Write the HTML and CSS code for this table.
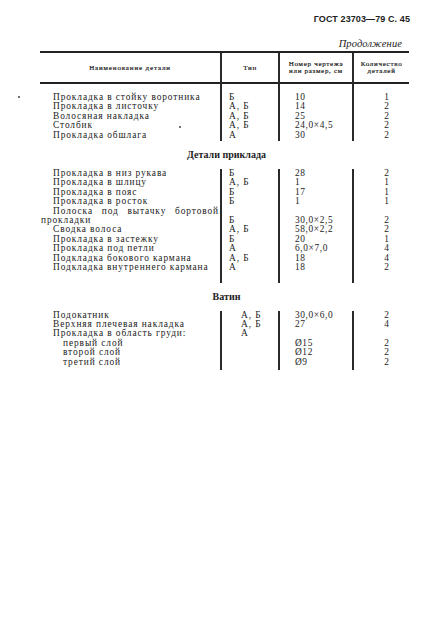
FILE: index.html
```html
<!DOCTYPE html>
<html lang="ru">
<head>
<meta charset="utf-8">
<title>ГОСТ 23703—79 С. 45</title>
<link rel="stylesheet" href="styles.css">
</head>
<body>
<div class="page">
  <span class="speck speck-a"></span>
  <span class="speck speck-b"></span>
  <div class="runhead">ГОСТ 23703—79 С. 45</div>
  <div class="cont">Продолжение</div>
  <table class="spec">
    <colgroup>
      <col class="c1"><col class="c2"><col class="c3"><col class="c4">
    </colgroup>
    <thead>
      <tr>
        <th class="h1">Наименование детали</th>
        <th class="h2">Тип</th>
        <th class="h3"><span class="hl">Номер чертежа</span><span class="hl">или размер, см</span></th>
        <th class="h4"><span class="hl">Количество</span><span class="hl">деталей</span></th>
      </tr>
    </thead>
    <tbody class="grp grp-a">
      <tr><td class="name">Прокладка в стойку воротника</td><td class="typ">Б</td><td class="num">10</td><td class="qty">1</td></tr>
      <tr><td class="name">Прокладка в листочку</td><td class="typ">А, Б</td><td class="num">14</td><td class="qty">2</td></tr>
      <tr><td class="name">Волосяная накладка</td><td class="typ">А, Б</td><td class="num">25</td><td class="qty">2</td></tr>
      <tr><td class="name">Столбик</td><td class="typ">А, Б</td><td class="num">24,0×4,5</td><td class="qty">2</td></tr>
      <tr><td class="name">Прокладка обшлага</td><td class="typ">А</td><td class="num">30</td><td class="qty">2</td></tr>
    </tbody>
    <tbody>
      <tr><td class="section" colspan="4">Детали приклада</td></tr>
    </tbody>
    <tbody class="grp grp-b">
      <tr><td class="name">Прокладка в низ рукава</td><td class="typ">Б</td><td class="num">28</td><td class="qty">2</td></tr>
      <tr><td class="name">Прокладка в шлицу</td><td class="typ">А, Б</td><td class="num">1</td><td class="qty">1</td></tr>
      <tr><td class="name">Прокладка в пояс</td><td class="typ">Б</td><td class="num">17</td><td class="qty">1</td></tr>
      <tr><td class="name">Прокладка в росток</td><td class="typ">Б</td><td class="num">1</td><td class="qty">1</td></tr>
      <tr><td class="name">Полоска под вытачку бортовой прокладки</td><td class="typ">Б</td><td class="num">30,0×2,5</td><td class="qty">2</td></tr>
      <tr><td class="name">Сводка волоса</td><td class="typ">А, Б</td><td class="num">58,0×2,2</td><td class="qty">2</td></tr>
      <tr><td class="name">Прокладка в застежку</td><td class="typ">Б</td><td class="num">20</td><td class="qty">1</td></tr>
      <tr><td class="name">Прокладка под петли</td><td class="typ">А</td><td class="num">6,0×7,0</td><td class="qty">4</td></tr>
      <tr><td class="name">Подкладка бокового кармана</td><td class="typ">А, Б</td><td class="num">18</td><td class="qty">4</td></tr>
      <tr><td class="name">Подкладка внутреннего кармана</td><td class="typ">А</td><td class="num">18</td><td class="qty">2</td></tr>
    </tbody>
    <tbody>
      <tr><td class="section" colspan="4">Ватин</td></tr>
    </tbody>
    <tbody class="grp grp-c">
      <tr><td class="name">Подокатник</td><td class="typ">А, Б</td><td class="num">30,0×6,0</td><td class="qty">2</td></tr>
      <tr><td class="name">Верхняя плечевая накладка</td><td class="typ">А, Б</td><td class="num">27</td><td class="qty">4</td></tr>
      <tr><td class="name">Прокладка в область груди:</td><td class="typ">А</td><td class="num"></td><td class="qty"></td></tr>
      <tr><td class="name sub">первый слой</td><td class="typ"></td><td class="num">Ø15</td><td class="qty">2</td></tr>
      <tr><td class="name sub">второй слой</td><td class="typ"></td><td class="num">Ø12</td><td class="qty">2</td></tr>
      <tr><td class="name sub">третий слой</td><td class="typ"></td><td class="num">Ø9</td><td class="qty">2</td></tr>
    </tbody>
  </table>
</div>
</body>
</html>
```

FILE: styles.css
```css
html, body {
  margin: 0;
  padding: 0;
  background: #fff;
}

body {
  color: #222;
  font-family: "Liberation Serif", "Times New Roman", serif;
}

.page {
  position: relative;
  width: 423px;
  height: 631px;
  padding-top: 13px;
  box-sizing: border-box;
}

.speck {
  position: absolute;
  width: 2px;
  height: 2px;
  border-radius: 1px;
  background: #444;
}
.speck-a { left: 18px; top: 96px; }
.speck-b { left: 179px; top: 126px; width: 1.5px; height: 1.5px; }

.runhead {
  text-align: right;
  padding-right: 13px;
  font-family: "Liberation Sans", Arial, sans-serif;
  font-weight: bold;
  font-size: 9px;
  line-height: 12px;
  letter-spacing: 0.1px;
}

.cont {
  margin-top: 13px;
  text-align: right;
  padding-right: 21px;
  font-style: italic;
  font-size: 10.5px;
  line-height: 12px;
  letter-spacing: 0.1px;
}

.spec {
  margin-top: 1px;
  margin-left: 40px;
  width: 369px;
  table-layout: fixed;
  border-collapse: separate;
  border-spacing: 0;
  border-top: 2px solid #222;
}

.c1 { width: 180px; }
.c2 { width: 58px; }
.c3 { width: 74px; }
.c4 { width: 57px; }

.spec th {
  height: 29px;
  padding: 0;
  font-weight: normal;
  font-size: 7px;
  line-height: 8px;
  letter-spacing: 0.7px;
  text-align: center;
  vertical-align: middle;
  border-bottom: 2px solid #222;
  -webkit-text-stroke: 0.2px #222;
}
.spec th.h1 { letter-spacing: 0.85px; }
.spec th .hl {
  display: block;
}
.spec th .hl + .hl {
  margin-top: -1px;
}
.spec th.h2, .spec th.h3, .spec th.h4 {
  border-left: 2px solid #2a2a2a;
}

.spec td {
  padding: 0;
  font-size: 9.4px;
  line-height: 9.4px;
  letter-spacing: 0.9px;
  vertical-align: bottom;
  white-space: nowrap;
}

.spec td.name {
  white-space: normal;
  text-align: justify;
  text-indent: 12px;
  padding-left: 1px;
  padding-right: 1px;
}
.spec td.name.sub { text-indent: 22px; }

.spec td.typ, .spec td.num, .spec td.qty {
  border-left: 2px solid #2a2a2a;
}
.spec td.typ { padding-left: 7px; }
.spec td.num { padding-left: 15px; letter-spacing: 0.6px; }
.spec td.qty { text-align: right; padding-right: 20px; letter-spacing: 0; }

.grp-c td.typ { padding-left: 19px; }

.grp-a tr:first-child td { padding-top: 9px; }
.grp-a tr:last-child td { padding-bottom: 1px; }
.grp-b tr:last-child td { padding-bottom: 10px; }
.grp-c tr:last-child td { padding-bottom: 3px; }

.spec td.section {
  height: 28px;
  padding: 0 0 0 4px;
  text-align: center;
  vertical-align: middle;
  font-weight: bold;
  font-size: 10px;
  letter-spacing: 0;
  line-height: 12px;
  border: none;
}
```
